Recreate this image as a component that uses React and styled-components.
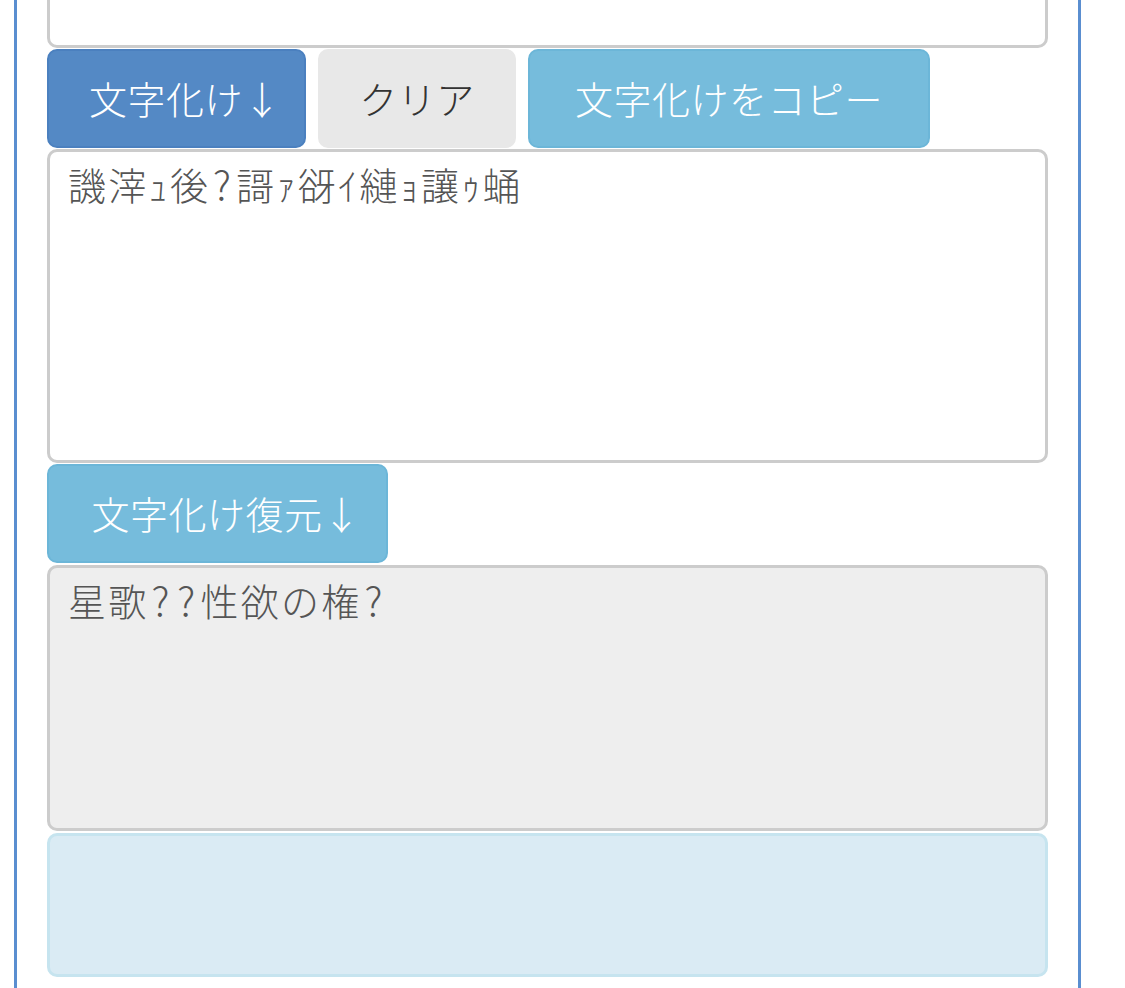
import React from "react";
import styled, { createGlobalStyle } from "styled-components";

const Global = createGlobalStyle`
  html, body { margin: 0; padding: 0; background: #fff; overflow: hidden; }
  body { font-family: "Noto Sans CJK JP", "Noto Sans", sans-serif; }
`;

const Frame = styled.div`
  margin-left: 14px;
  width: 1067px;
  box-sizing: border-box;
  min-height: 1200px;
  border-left: 3px solid #5a8ed0;
  border-right: 3px solid #5a8ed0;
  padding: 0 30px;
  margin-top: -150px;
`;

const Column = styled.div`
  display: flex;
  flex-direction: column;
`;

const Area = styled.div`
  box-sizing: border-box;
  width: 100%;
  height: ${(p) => p.$h}px;
  border: 3px solid ${(p) => (p.$info ? "#c6e4ef" : "#cccccc")};
  border-radius: 10px;
  background: ${(p) => (p.$info ? "#daebf4" : p.$readonly ? "#eeeeee" : "#ffffff")};
  padding: 4px 18px;
  font-family: "Noto Sans CJK JP", sans-serif;
  font-size: 38px;
  font-weight: 300;
  letter-spacing: 2.3px;
  line-height: 54px;
  color: #555555;
  white-space: pre-wrap;
  margin-top: ${(p) => p.$mt || 0}px;
`;

const Q = styled.span`
  display: inline-block;
  width: 0.65em;
  text-align: center;
  font-size: 1.05em;
`;

const ButtonRow = styled.div`
  display: flex;
  gap: 12px;
  margin-top: ${(p) => p.$mt || 0}px;
  margin-bottom: 1px;
`;

const variants = {
  primary: { bg: "#5489c5", border: "#4b80bf", color: "#ffffff" },
  default: { bg: "#e8e8e8", border: "#e8e8e8", color: "#333333" },
  info: { bg: "#76bcdc", border: "#6cb6d8", color: "#ffffff" },
};

const Button = styled.button`
  box-sizing: border-box;
  width: ${(p) => p.$w}px;
  height: 99px;
  border-radius: 10px;
  border: 2px solid ${(p) => variants[p.$v].border};
  background: ${(p) => variants[p.$v].bg};
  color: ${(p) => variants[p.$v].color};
  font-family: "Noto Sans CJK JP", "Noto Sans", sans-serif;
  font-size: 38px;
  font-weight: 300;
  letter-spacing: 0.5px;
  display: flex;
  align-items: center;
  justify-content: center;
  padding: 0 0 2px;
  white-space: nowrap;
  cursor: pointer;
`;

const Arrow = styled.span`
  display: inline-block;
  width: 0.55em;
  text-align: center;
`;

export default function App() {
  return (
    <>
      <Global />
      <Frame>
        <Column>
          <Area $h={198} />
          <ButtonRow $mt={1}>
            <Button $v="primary" $w={259}>文字化け<Arrow>↓</Arrow></Button>
            <Button $v="default" $w={198}>クリア</Button>
            <Button $v="info" $w={402}>文字化けをコピー</Button>
          </ButtonRow>
          <Area $h={314}>譏滓ｭ後<Q>?</Q>謌ｧ谺ｲ縺ｮ讓ｩ蛹</Area>
          <ButtonRow $mt={1}>
            <Button $v="info" $w={341}>文字化け復元<Arrow>↓</Arrow></Button>
          </ButtonRow>
          <Area $h={266} $readonly $mt={1}>星歌<Q>?</Q><Q>?</Q>性欲の権<Q>?</Q></Area>
          <Area $h={144} $info $mt={2} />
        </Column>
      </Frame>
    </>
  );
}
